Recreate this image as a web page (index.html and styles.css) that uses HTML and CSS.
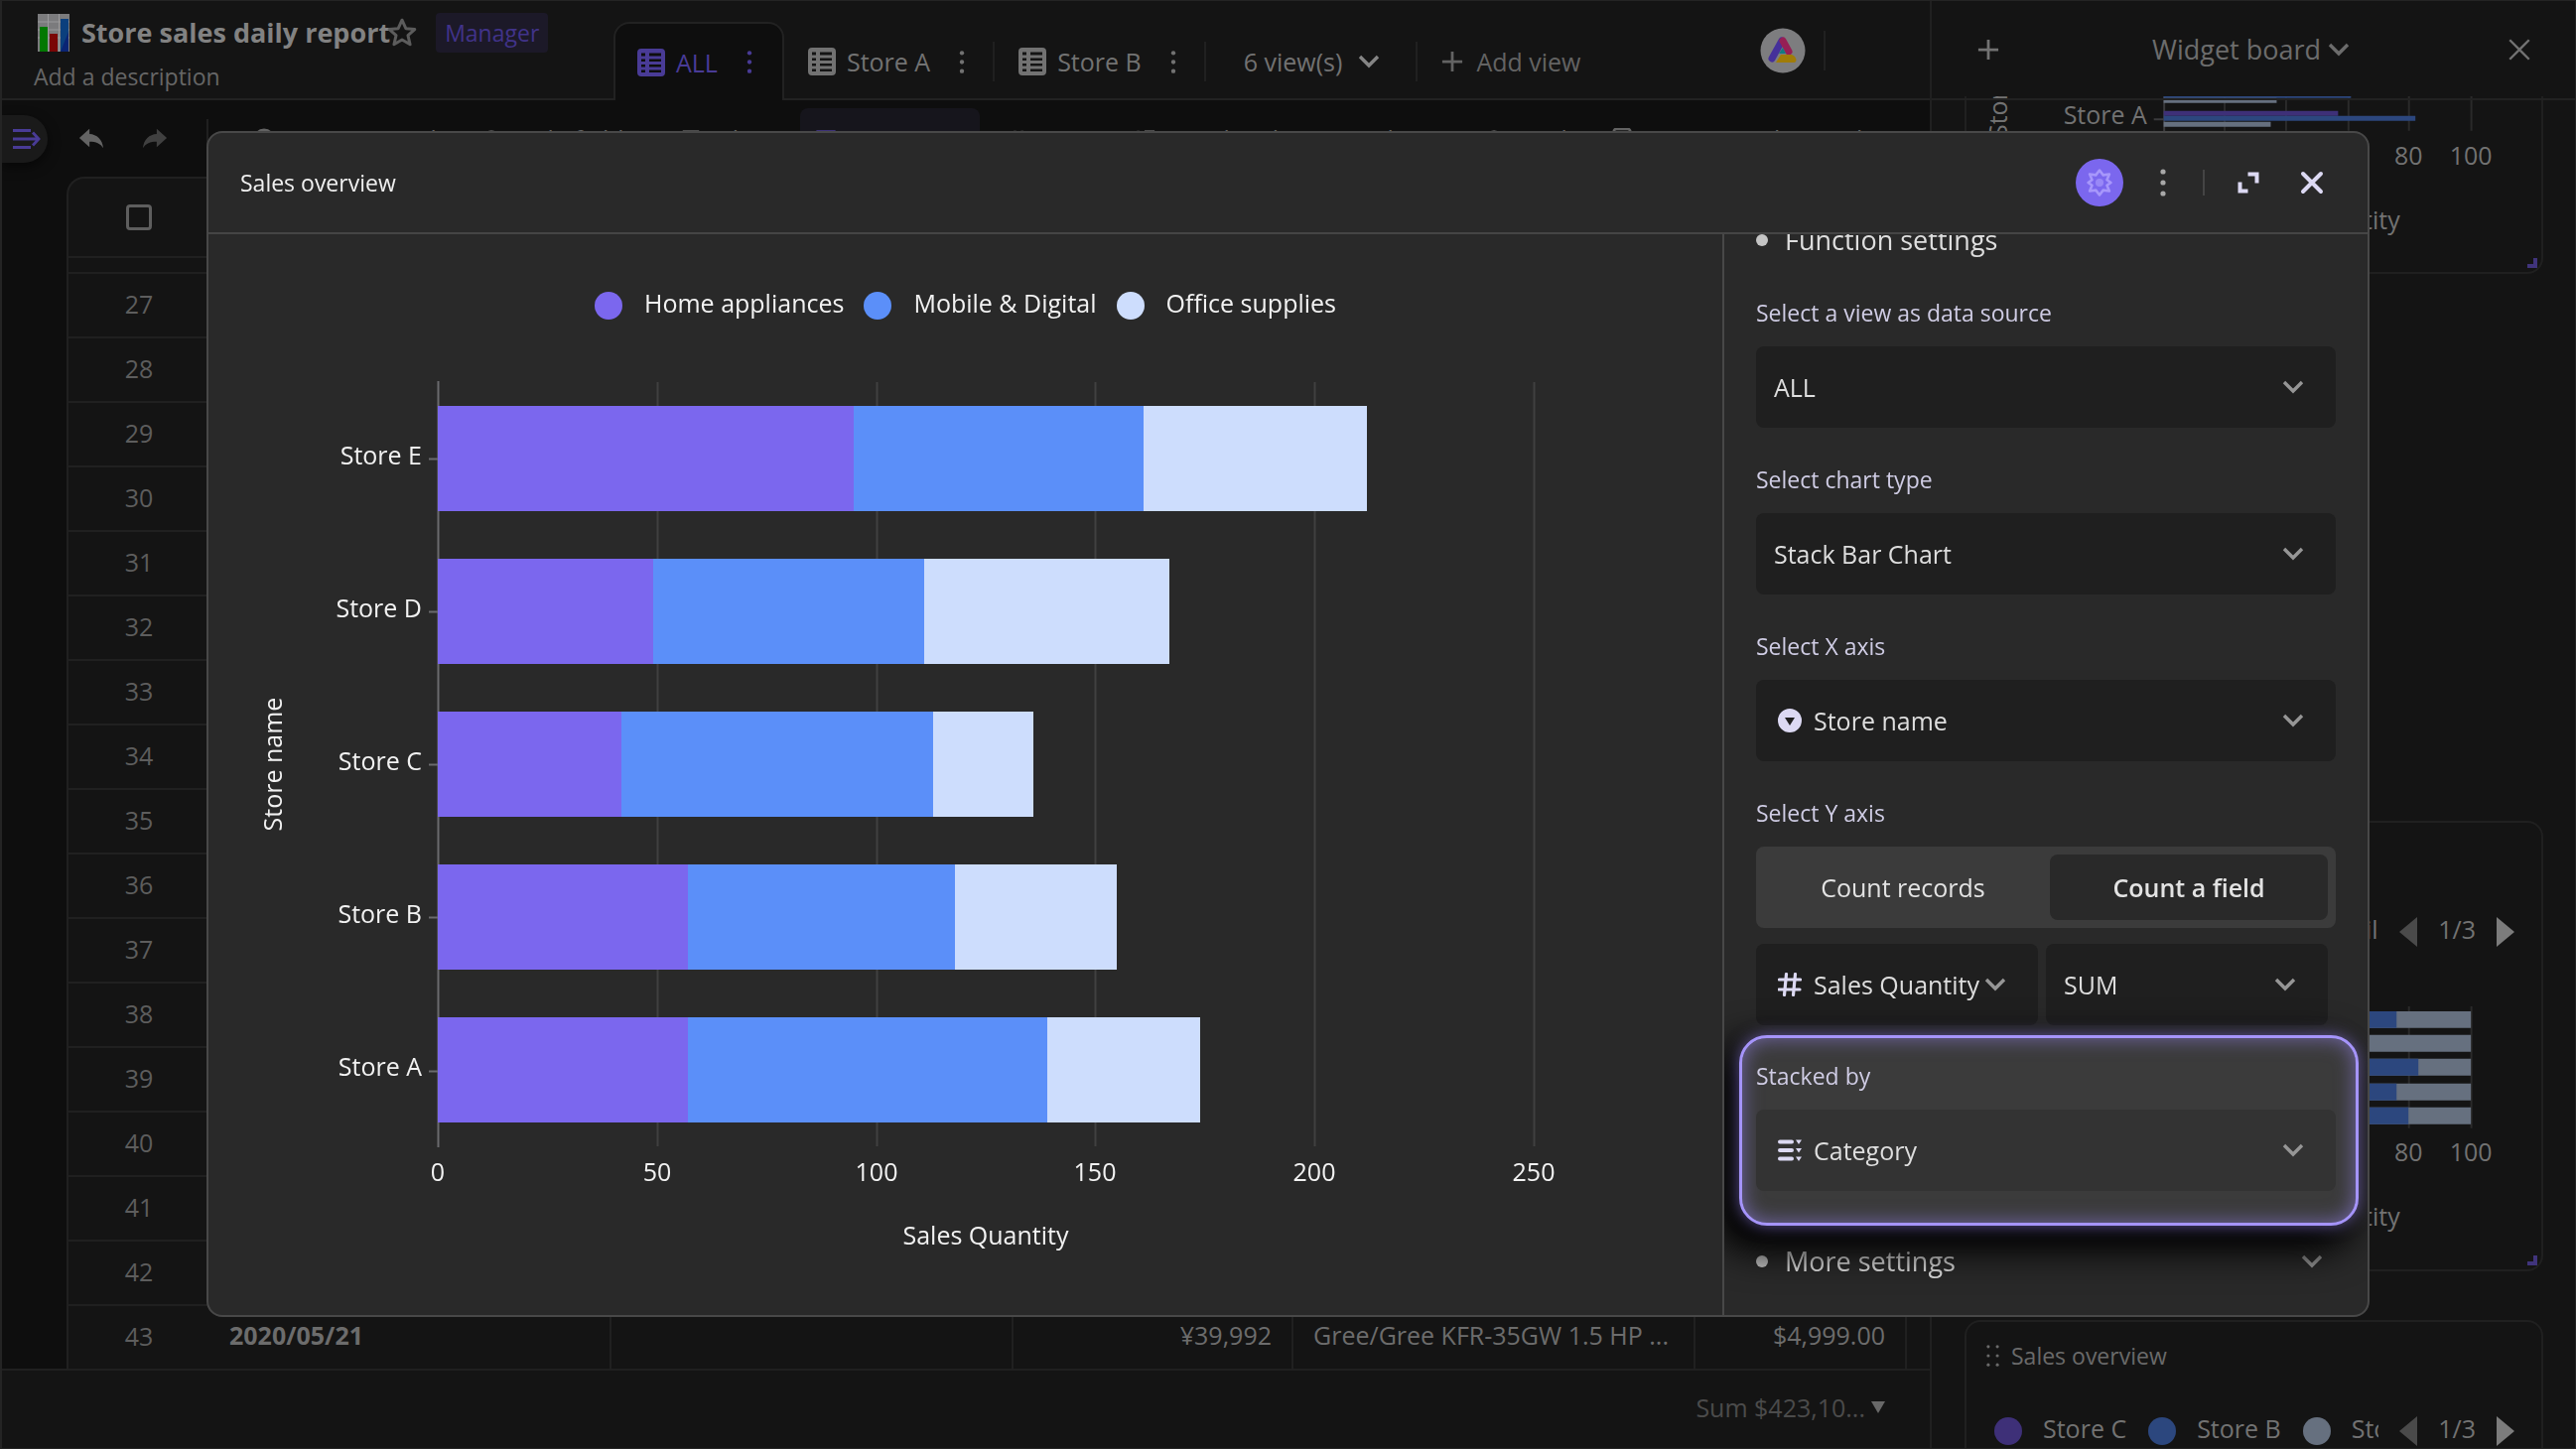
FILE: index.html
```html
<!DOCTYPE html>
<html lang="en">
<head>
<meta charset="utf-8">
<meta name="viewport" content="width=device-width, initial-scale=1">
<title>Store sales daily report</title>
<link rel="stylesheet" href="styles.css">
</head>
<body>
<svg class="sprite" aria-hidden="true">
  <symbol id="i-grid" viewBox="0 0 28 28"><path fill-rule="evenodd" fill="currentColor" d="M4 0h20a4 4 0 0 1 4 4v20a4 4 0 0 1-4 4H4a4 4 0 0 1-4-4V4a4 4 0 0 1 4-4ZM4 4.500v3h4v-3Zm8 0v3h12v-3ZM4 10.500v2.500h4v-2.500Zm8 0v2.500h12v-2.500ZM4 16v2.500h4V16Zm8 0v2.500h12V16ZM4 21.500v2.500h4v-2.500Zm8 0v2.500h12v-2.500Z"/></symbol>
  <symbol id="i-dots" viewBox="0 0 24 28"><g fill="currentColor"><circle cx="12" cy="3" r="2.6"/><circle cx="12" cy="14" r="2.6"/><circle cx="12" cy="25" r="2.6"/></g></symbol>
  <symbol id="i-chevron" viewBox="0 0 24 24"><path d="M3 7l9 9 9-9" fill="none" stroke="currentColor" stroke-width="3.4"/></symbol>
  <symbol id="i-plus" viewBox="0 0 24 24"><path d="M12 1v22M1 12h22" fill="none" stroke="currentColor" stroke-width="3"/></symbol>
  <symbol id="i-close" viewBox="0 0 24 24"><path d="M3 3l18 18M21 3L3 21" fill="none" stroke="currentColor" stroke-width="4" stroke-linecap="round"/></symbol>
  <symbol id="i-close-thin" viewBox="0 0 24 24"><path d="M3 3l18 18M21 3L3 21" fill="none" stroke="currentColor" stroke-width="2.2"/></symbol>
  <symbol id="i-undo" viewBox="0 0 28 24"><path fill="currentColor" d="M12 1v5.500C20 7 26 12 27 22c-3-5-8-7-15-7v6L1 11Z"/></symbol>
  <symbol id="i-circle-down" viewBox="0 0 24 24"><path fill-rule="evenodd" fill="currentColor" d="M12 0a12 12 0 1 1 0 24 12 12 0 0 1 0-24ZM7 9l5 8 5-8Z"/></symbol>
  <symbol id="i-hash" viewBox="0 0 24 24"><path d="M8.500 1.500L6.500 22.500M17.500 1.500L15.500 22.500M1.500 7h21M1 17h21" fill="none" stroke="currentColor" stroke-width="3.200" stroke-linecap="round"/></symbol>
  <symbol id="i-list" viewBox="0 0 24 24"><path d="M2 3.500h12M2 12h12M2 20.500h12" stroke="currentColor" stroke-width="4" stroke-linecap="round"/><path fill="currentColor" d="M18 1.500h6l-3 4.500ZM18 10h6l-3 4.500ZM18 18.500h6l-3 4.500Z"/></symbol>
  <symbol id="i-left" viewBox="0 0 20 30"><path fill="currentColor" d="M19 0v30L1 15Z"/></symbol>
  <symbol id="i-right" viewBox="0 0 20 30"><path fill="currentColor" d="M1 0v30l18-15Z"/></symbol>
  <symbol id="i-corner" viewBox="0 0 10 10"><path fill="currentColor" d="M6 0h4v10H0V6h6Z"/></symbol>
</svg>

<div class="app">
  <main class="sheet">
    <header class="topbar">
      <div class="doc">
        <div class="doc-title">
          <svg class="doc-icon" viewBox="0 0 32 38"><path fill="#7b7b7d" d="M0 0h32v38H0Z"/><path stroke="#9a9a9c" d="M0 8h32M0 16h32M0 24h32M10.500 0v38M21.500 0v38"/><path fill="#027802" d="M2 13h8v25H2Z"/><path fill="#7a0606" d="M12 20h8v18h-8Z"/><path fill="#0b3f7d" d="M23 5h8v33h-8Z"/><path fill="#0a2474" d="M31 18v20h-8Z"/></svg>
          <h1>Store sales daily report</h1>
          <button class="icon-btn star" aria-label="Favorite"><svg viewBox="0 0 30 30"><path d="M15 3l3.600 8 8.400.8-6.400 5.700 2 8.600L15 21.600 7.400 26l2-8.500L3 11.800l8.400-.8Z" fill="none" stroke="currentColor" stroke-width="2.800" stroke-linejoin="round"/></svg></button>
          <span class="badge">Manager</span>
        </div>
        <p>Add a description</p>
      </div>
      <nav class="tabs">
        <div class="tab tab-active"><a href="#all"><svg class="i28"><use href="#i-grid"/></svg>ALL</a><button class="icon-btn" aria-label="ALL options"><svg class="i-dots"><use href="#i-dots"/></svg></button></div>
        <div class="tab"><a href="#a"><svg class="i28"><use href="#i-grid"/></svg>Store A</a><button class="icon-btn" aria-label="Store A options"><svg class="i-dots"><use href="#i-dots"/></svg></button></div>
        <i class="rule"></i>
        <div class="tab"><a href="#b"><svg class="i28"><use href="#i-grid"/></svg>Store B</a><button class="icon-btn" aria-label="Store B options"><svg class="i-dots"><use href="#i-dots"/></svg></button></div>
        <i class="rule"></i>
        <button class="views">6 view(s)<svg class="i24"><use href="#i-chevron"/></svg></button>
        <i class="rule"></i>
        <button class="add-view"><svg class="i22"><use href="#i-plus"/></svg>Add view</button>
        <svg class="logo" viewBox="0 0 46 46"><circle cx="23" cy="23" r="22.500" fill="#7d7d7f"/><path d="M22 13L12 31" stroke="#45309a" stroke-width="7" stroke-linecap="round"/><path d="M23 13l6 11" stroke="#961f55" stroke-width="7" stroke-linecap="round"/><path d="M19 26l4-6 3 6Z" fill="#127a80"/><path d="M16 35l5-8h11c5 2 6 8 2 8Z" fill="#a07c08"/></svg>
        <i class="rule logo-rule"></i>
      </nav>
    </header>

    <div class="toolbar">
      <button class="side-toggle" aria-label="Open side panel"><svg viewBox="0 0 30 22"><path d="M1 2.500h18M1 11h26M1 19.500h18M21 4.500l6 6.500-6 6.500" fill="none" stroke="currentColor" stroke-width="2.800"/></svg></button>
      <button class="icon-btn" aria-label="Undo"><svg class="i26"><use href="#i-undo"/></svg></button>
      <button class="icon-btn redo" aria-label="Redo"><svg class="i26"><use href="#i-undo"/></svg></button>
      <i class="rule"></i>
      <div class="tools">
        <button><svg viewBox="0 0 24 24"><circle cx="12" cy="12" r="10"/></svg>Insert record</button>
        <button><svg viewBox="0 0 24 24"><path d="M2 12q10-16 20 0"/></svg>Hide fields</button>
        <button><svg viewBox="0 0 24 24"><path d="M3 4h18M6 11h12M10 18h4"/></svg>Filter</button>
        <button class="tool-on"><svg viewBox="0 0 24 24"><path d="M3 4h18v6H3ZM3 15h18"/></svg>1 group(s)</button>
        <button><svg viewBox="0 0 24 24"><path d="M7 3v18M15 21V3"/></svg>Sort</button>
        <button><svg viewBox="0 0 24 24"><path d="M5 3v18M12 4h11M12 12h11"/></svg>Row height</button>
        <button><svg viewBox="0 0 24 24"><path d="M12 5v14"/></svg>Share</button>
        <button><svg viewBox="0 0 24 24"><circle cx="11" cy="12" r="8"/></svg>Find</button>
        <button><svg viewBox="0 0 24 24"><rect x="3" y="1" width="18" height="22" rx="3"/></svg>Form</button>
        <button>Advanced</button>
      </div>
    </div>

    <div class="grid-area">
      <table class="grid">
        <colgroup><col class="c-num"><col class="c-wide"><col class="c-wide"><col class="c-mid"><col class="c-wide"><col class="c-price"><col></colgroup>
        <thead><tr><th><input type="checkbox" aria-label="Select all records"></th><th colspan="6"></th></tr></thead>
        <tbody>
          <tr class="spacer"><td colspan="7"></td></tr>
          <tr><td>27</td><td></td><td></td><td></td><td></td><td></td><td></td></tr>
          <tr><td>28</td><td></td><td></td><td></td><td></td><td></td><td></td></tr>
          <tr><td>29</td><td></td><td></td><td></td><td></td><td></td><td></td></tr>
          <tr><td>30</td><td></td><td></td><td></td><td></td><td></td><td></td></tr>
          <tr><td>31</td><td></td><td></td><td></td><td></td><td></td><td></td></tr>
          <tr><td>32</td><td></td><td></td><td></td><td></td><td></td><td></td></tr>
          <tr><td>33</td><td></td><td></td><td></td><td></td><td></td><td></td></tr>
          <tr><td>34</td><td></td><td></td><td></td><td></td><td></td><td></td></tr>
          <tr><td>35</td><td></td><td></td><td></td><td></td><td></td><td></td></tr>
          <tr><td>36</td><td></td><td></td><td></td><td></td><td></td><td></td></tr>
          <tr><td>37</td><td></td><td></td><td></td><td></td><td></td><td></td></tr>
          <tr><td>38</td><td></td><td></td><td></td><td></td><td></td><td></td></tr>
          <tr><td>39</td><td></td><td></td><td></td><td></td><td></td><td></td></tr>
          <tr><td>40</td><td></td><td></td><td></td><td></td><td></td><td></td></tr>
          <tr><td>41</td><td></td><td></td><td></td><td></td><td></td><td></td></tr>
          <tr><td>42</td><td></td><td></td><td></td><td></td><td></td><td></td></tr>
          <tr><td>43</td><td class="date">2020/05/21</td><td></td><td class="num">¥39,992</td><td>Gree/Gree KFR-35GW 1.5 HP ...</td><td class="num">$4,999.00</td><td></td></tr>
        </tbody>
      </table>
    </div>
    <footer class="stats"><button>Sum $423,10...<svg viewBox="0 0 14 12"><path fill="currentColor" d="M0 0h14L7 12Z"/></svg></button></footer>
  </main>

  <aside class="board">
    <header class="board-head">
      <button class="icon-btn" aria-label="Add widget"><svg class="i22"><use href="#i-plus"/></svg></button>
      <button class="board-name">Widget board<svg class="i24"><use href="#i-chevron"/></svg></button>
      <button class="icon-btn" aria-label="Close widget board"><svg class="i26"><use href="#i-close-thin"/></svg></button>
    </header>
    <div class="board-list">
      <section class="card card-first">
        <svg class="mini" viewBox="0 0 580 320" role="img" aria-label="Bar chart">
          <path class="line" d="M260.500 54v122M322.500 54v122M385.500 54v122M446.500 54v122M509.500 54v122"/>
          <path class="axis" d="M199.500 54v123M189 164.500h10"/>
          <path class="s2" d="M199 138h189v5H199Z"/><path class="s3" d="M199 143h114v5H199Z"/>
          <path class="s1" d="M199 156h176v5H199Z"/><path class="s2" d="M199 161h254v5H199Z"/><path class="s3" d="M199 167h108v5H199Z"/>
          <text x="182" y="169" text-anchor="end">Store A</text>
          <text transform="translate(41 116) rotate(-90)" text-anchor="middle">Store name</text>
          <text x="446" y="210" text-anchor="middle">80</text><text x="509" y="210" text-anchor="middle">100</text>
          <text x="354" y="276" text-anchor="middle">Sales Quantity</text>
        </svg>
        <svg class="corner"><use href="#i-corner"/></svg>
      </section>
      <section class="card card-second">
        <div class="mini-legend legend-end"><span class="clip">Mobile</span>
          <button class="pager off" aria-label="Previous"><svg><use href="#i-left"/></svg></button><span>1/3</span><button class="pager" aria-label="Next"><svg><use href="#i-right"/></svg></button>
        </div>
        <svg class="mini" viewBox="0 0 580 320" role="img" aria-label="Percent stacked bar chart">
          <path class="line" d="M446.500 54v123M509.500 54v123"/>
          <path class="s3" d="M199 59h310v17H199ZM199 83h310v17H199ZM199 107h310v17H199ZM199 132h310v17H199ZM199 156h310v17H199Z"/>
          <path class="s2" d="M199 59h235v17H199ZM199 107h257v17H199ZM199 132h235v17H199ZM199 156h247v17H199Z"/>
          <text x="446" y="210" text-anchor="middle">80</text><text x="509" y="210" text-anchor="middle">100</text>
          <text x="354" y="276" text-anchor="middle">Sales Quantity</text>
        </svg>
        <svg class="corner"><use href="#i-corner"/></svg>
      </section>
      <section class="card">
        <h2><svg viewBox="0 0 14 24"><g fill="currentColor"><circle cx="2" cy="2" r="1.700"/><circle cx="12" cy="2" r="1.700"/><circle cx="2" cy="12" r="1.700"/><circle cx="12" cy="12" r="1.700"/><circle cx="2" cy="22" r="1.700"/><circle cx="12" cy="22" r="1.700"/></g></svg>Sales overview</h2>
        <div class="mini-legend">
          <i class="dot d1"></i><span>Store C</span><i class="dot d2"></i><span>Store B</span><i class="dot d3"></i><span class="clip">Store A</span>
          <button class="pager off" aria-label="Previous"><svg><use href="#i-left"/></svg></button><span>1/3</span><button class="pager" aria-label="Next"><svg><use href="#i-right"/></svg></button>
        </div>
      </section>
    </div>
  </aside>
</div>

<div class="modal" role="dialog" aria-label="Sales overview">
  <header class="modal-head">
    <h2>Sales overview</h2>
    <button class="gear" aria-label="Settings"><svg viewBox="0 0 28 28"><path d="M14 1.500l3.700 4.900 6.200-.9-2.400 5.700 3.900 2.800-3.900 2.800 2.400 5.700-6.200-.9L14 26.500l-3.700-4.900-6.200.9 2.400-5.700L2.600 14l3.900-2.800-2.400-5.700 6.200.9Z" fill="none" stroke="currentColor" stroke-width="2.600" stroke-linejoin="round"/><circle cx="14" cy="14" r="4" fill="currentColor" fill-opacity=".7"/></svg></button>
    <button class="icon-btn more" aria-label="More"><svg class="i28"><use href="#i-dots"/></svg></button>
    <i class="rule"></i>
    <button class="icon-btn wide" aria-label="Expand"><svg class="i24" viewBox="0 0 24 24"><path d="M11.500 3.500h9v9M3.500 11.500v9h8" fill="none" stroke="currentColor" stroke-width="4"/></svg></button>
    <button class="icon-btn wide" aria-label="Close"><svg class="i24"><use href="#i-close"/></svg></button>
  </header>
  <div class="modal-body">
    <section class="chart">
      <ul class="legend">
        <li><i class="dot l1"></i><span>Home appliances</span></li>
        <li><i class="dot l2"></i><span>Mobile &amp; Digital</span></li>
        <li><i class="dot l3"></i><span>Office supplies</span></li>
      </ul>
      <svg class="plot" viewBox="210 370 1525 950" role="img" aria-label="Sales quantity by store, stacked by category">
        <path class="line" d="M662.500 385v770M883.500 385v770M1103.500 385v770M1324.500 385v770M1545.500 385v770"/>
        <path class="axis" d="M441.500 384v772M432 462.500h9M432 616.500h9M432 770.500h9M432 924.500h9M432 1079.500h9"/>
        <g class="f1"><rect x="441" y="409" width="419" height="106"/><rect x="441" y="563" width="217" height="106"/><rect x="441" y="717" width="185" height="106"/><rect x="441" y="871" width="252" height="106"/><rect x="441" y="1025" width="252" height="106"/></g>
        <g class="f2"><rect x="860" y="409" width="292" height="106"/><rect x="658" y="563" width="273" height="106"/><rect x="626" y="717" width="314" height="106"/><rect x="693" y="871" width="269" height="106"/><rect x="693" y="1025" width="362" height="106"/></g>
        <g class="f3"><rect x="1152" y="409" width="225" height="106"/><rect x="931" y="563" width="247" height="106"/><rect x="940" y="717" width="101" height="106"/><rect x="962" y="871" width="163" height="106"/><rect x="1055" y="1025" width="154" height="106"/></g>
        <g text-anchor="end"><text x="425" y="468">Store E</text><text x="425" y="622">Store D</text><text x="425" y="776">Store C</text><text x="425" y="930">Store B</text><text x="425" y="1084">Store A</text></g>
        <g text-anchor="middle"><text x="441" y="1190">0</text><text x="662" y="1190">50</text><text x="883" y="1190">100</text><text x="1103" y="1190">150</text><text x="1324" y="1190">200</text><text x="1545" y="1190">250</text>
        <text x="993" y="1254">Sales Quantity</text><text transform="translate(284 770) rotate(-90)">Store name</text></g>
      </svg>
    </section>
    <form class="settings">
      <h3>Function settings</h3>
      <div class="field"><label for="view">Select a view as data source</label>
        <div class="select"><select id="view"><option>ALL</option></select><svg class="chev"><use href="#i-chevron"/></svg></div></div>
      <div class="field"><label for="type">Select chart type</label>
        <div class="select"><select id="type"><option>Stack Bar Chart</option></select><svg class="chev"><use href="#i-chevron"/></svg></div></div>
      <div class="field"><label for="x">Select X axis</label>
        <div class="select with-icon"><select id="x"><option>Store name</option></select><svg class="lead"><use href="#i-circle-down"/></svg><svg class="chev"><use href="#i-chevron"/></svg></div></div>
      <div class="field"><label for="y">Select Y axis</label>
        <div class="segmented"><button type="button">Count records</button><button type="button" class="on">Count a field</button></div>
        <div class="pair">
          <div class="select with-icon"><select id="y"><option>Sales Quantity</option></select><svg class="lead"><use href="#i-hash"/></svg><svg class="chev"><use href="#i-chevron"/></svg></div>
          <div class="select"><select aria-label="Aggregation"><option>SUM</option></select><svg class="chev"><use href="#i-chevron"/></svg></div>
        </div></div>
      <div class="field spotlight"><label for="stack">Stacked by</label>
        <div class="select with-icon"><select id="stack"><option>Category</option></select><svg class="lead"><use href="#i-list"/></svg><svg class="chev"><use href="#i-chevron"/></svg></div></div>
      <h3 class="more-settings">More settings<svg class="i24"><use href="#i-chevron"/></svg></h3>
    </form>
  </div>
</div>
</body>
</html>
```
FILE: styles.css
```css
* { box-sizing: border-box; }
body { margin: 0; background: #0e0e0e; color: #727272; font: 25px/36px "Open Sans", "Noto Sans", sans-serif; }
h1, h2, h3, p, ul { margin: 0; padding: 0; font-weight: 400; }
a { color: inherit; text-decoration: none; }
button { margin: 0; padding: 0; border: 0; background: none; color: inherit; font: inherit; display: flex; align-items: center; cursor: pointer; }
svg { display: block; flex: none; }
.sprite { display: none; }
.i22 { width: 22px; height: 22px; }
.i24 { width: 24px; height: 24px; }
.i26 { width: 26px; height: 26px; }
.i28 { width: 28px; height: 28px; }
.rule { width: 2px; height: 40px; flex: none; background: #202020; }
.icon-btn { justify-content: center; flex: none; width: 32px; height: 32px; }

.app { display: grid; grid-template-columns: 1fr 650px; height: 100vh; overflow: hidden; border: 1px solid #242424; border-left-width: 2px; }
.sheet { display: flex; flex-direction: column; min-width: 0; min-height: 0; }

/* top bar */
.topbar { display: flex; height: 100px; flex: none; background: #141414; border-bottom: 2px solid #222; }
.doc { width: 616px; flex: none; padding: 11px 0 0 32px; color: #666; }
.doc p { font-size: 23px; line-height: 36px; margin-top: 5px; }
.doc-title { display: flex; align-items: center; height: 42px; }
.doc-icon { width: 32px; height: 38px; margin: 0 12px 0 4px; }
h1 { font-size: 27px; font-weight: 700; color: #828282; white-space: nowrap; }
.star { margin-left: -4px; color: #5c5c5c; }
.star svg { width: 32px; height: 32px; }
.badge { margin-left: 18px; padding: 0 9px; height: 40px; line-height: 40px; font-size: 23px; border-radius: 4px; background: #1c1928; color: #41338a; }
.tabs { display: flex; align-items: center; flex: 1; padding-top: 24px; white-space: nowrap; }
.tab { display: flex; align-items: center; gap: 16px; padding: 0 15px 0 24px; height: 40px; }
.tab a { display: flex; align-items: center; gap: 11px; }
.tab .i-dots { width: 20px; height: 25px; }
.tab-active { align-self: stretch; height: 79px; margin: -3px 0 -2px; padding: 0 17px 0 22px; border: 2px solid #222; border-bottom: 0; border-radius: 16px 16px 0 0; background: #0e0e0e; color: #493b96; }
.views { gap: 15px; padding: 0 35px 0 38px; }
.add-view { gap: 13px; padding-left: 24px; color: #636363; }
.views svg { color: #858585; }
.logo { width: 46px; height: 46px; margin: -22px 18px 0 auto; }
.logo-rule { margin: -22px 105px 0 0; }

/* toolbar */
.toolbar { display: flex; align-items: center; height: 77px; flex: none; color: #636363; }
.side-toggle { width: 46px; height: 48px; padding-left: 10px; border-radius: 0 24px 24px 0; margin: 0 28px 0 0; background: #1a1a1a; color: #493b96; box-shadow: 0 4px 12px #0008; }
.side-toggle svg { width: 30px; height: 22px; }
.redo { margin-left: 32px; color: #404040; }
.redo svg { transform: scaleX(-1); }
.toolbar > .rule { margin: 0 30px 0 36px; }
.tools { display: flex; gap: 14px; white-space: nowrap; }
.tools button { gap: 12px; height: 62px; padding: 0 15px; }
.tools svg { width: 22px; height: 22px; fill: none; stroke: currentColor; stroke-width: 3; }
.tool-on { border-radius: 8px; background: #16151c; color: #493b96; }

/* record grid */
.grid-area { flex: 1; min-height: 0; padding-left: 65px; overflow: hidden; }
.grid { width: 100%; table-layout: fixed; border-collapse: separate; border-spacing: 0; background: #141414; border: 2px solid #202020; border-right: 0; border-radius: 18px 0 0 0; color: #6c6c6c; }
.c-num { width: 142px; } .c-wide { width: 405px; } .c-mid { width: 282px; } .c-price { width: 213px; }
.grid th { height: 80px; padding: 0; border-bottom: 2px solid #202020; }
.grid td { height: 65px; padding: 0 20px 6px; line-height: 36px; border-bottom: 2px solid #202020; border-right: 2px solid #202020; white-space: nowrap; overflow: hidden; }
.grid td:first-child { padding: 0 0 4px; text-align: center; color: #5d5d5d; border-right: 0; }
.grid td:last-child { border-right: 0; }
.grid .spacer td { height: 16px; padding: 0; }
.grid .date { font-weight: 700; }
.grid .num { text-align: right; }
.grid input { appearance: none; display: block; width: 26px; height: 26px; margin: 0 auto; border: 3px solid #5e5e5e; border-radius: 4px; }
.stats { display: flex; justify-content: flex-end; height: 80px; flex: none; padding: 0 45px 4px 0; background: #141414; border-top: 2px solid #202020; color: #4b4b4b; }
.stats button { gap: 6px; }
.stats svg { width: 14px; height: 12px; color: #686868; }

/* widget board */
.board { display: flex; flex-direction: column; min-height: 0; background: #141414; border-left: 2px solid #202020; }
.board-head { display: flex; align-items: center; justify-content: space-between; height: 96px; flex: none; padding: 2px 40px 0 41px; }
.board-name { gap: 6px; font-size: 27px; margin-right: 5px; color: #6c6c6c; }
.board-list { position: relative; flex: 1; min-height: 0; padding: 0 32px 0 33px; overflow: hidden; }
.board-list::before { content: ""; position: absolute; inset: 2px 0 auto; height: 2px; background: #222; z-index: 1; }
.card { position: relative; display: flex; flex-direction: column; border: 2px solid #202020; border-radius: 16px; margin-bottom: 49px; height: 454px; overflow: hidden; }
.card-first { height: 320px; margin-top: -141px; border-top: 0; }
.card-second { margin-top: 551px; padding-top: 68px; }
.card h2 { display: flex; align-items: center; gap: 12px; height: 68px; flex: none; padding-left: 20px; font-size: 23px; color: #6a6a6a; }
.card h2 svg { width: 13px; height: 22px; }
.mini { width: 100%; margin-top: auto; }
.mini text { font-size: 25px; fill: #727272; }
.line { fill: none; stroke: #2a2a2a; stroke-width: 2; }
.axis { fill: none; stroke: #3a3a3c; stroke-width: 2; }
.s1 { fill: #3e3078; } .s2 { fill: #2c477e; } .s3 { fill: #66707f; }
.corner { position: absolute; right: 4px; bottom: 4px; width: 10px; height: 10px; color: #40347c; }
.mini-legend { display: flex; align-items: center; height: 40px; margin-top: 22px; padding: 0 26px 0 28px; white-space: nowrap; }
.mini-legend span { padding-bottom: 6px; }
.dot { width: 28px; height: 28px; flex: none; border-radius: 50%; margin-right: 22px; }
.mini-legend .dot { margin-right: 21px; }
.mini-legend .dot + span { margin-right: 22px; }
.d1 { background: #3e3078; } .d2 { background: #2c477e; } .d3 { background: #66707f; }
.mini-legend .clip { flex: 1; min-width: 0; overflow: hidden; }
.mini-legend .dot + .clip { margin-right: 20px; }
.mini-legend.legend-end .clip { flex: none; width: 66px; margin-right: 20px; }
.legend-end { justify-content: flex-end; }
.pager svg { width: 20px; height: 30px; }
.pager { color: #7c7c7c; }
.off { color: #4a4a4a; }
.pager + span { margin: 0 20px; }

/* widget dialog */
.modal { position: fixed; inset: 132px 208px 133px 208px; display: flex; flex-direction: column; background: #292929; border: 2px solid #484848; border-radius: 16px; color: #e3e3e3; overflow: hidden; }
.modal-head { display: flex; align-items: center; gap: 24px; height: 102px; flex: none; padding: 0 36px 0 32px; border-bottom: 2px solid #454545; }
.modal-head h2 { flex: 1; font-size: 23px; color: #f0f0f0; }
.modal-head .rule { height: 26px; background: #444; }
.gear { justify-content: center; width: 48px; height: 48px; border-radius: 50%; background: #7b67ee; color: #a797fb; }
.gear svg { width: 28px; height: 28px; }
.more { color: #a8a8a8; }
.wide { width: 40px; color: #dcd9f3; }
.modal-body { display: flex; flex: 1; min-height: 0; }
.chart { flex: 1; min-width: 0; color: #f2f2f2; }
.legend { display: flex; justify-content: center; gap: 20px; list-style: none; padding-top: 52px; height: 134px; }
.legend li { display: flex; height: 40px; align-items: center; }
.legend span { padding-bottom: 6px; }
.l1 { background: #7b67ee; } .l2 { background: #5b8ff9; } .l3 { background: #cdddfd; }
.plot { width: 100%; }
.plot text { font-size: 25px; fill: #f2f2f2; }
.plot .line { stroke: #404040; }
.plot .axis { stroke: #6a6a6e; }
.f1 { fill: #7b67ee; } .f2 { fill: #5b8ff9; } .f3 { fill: #cdddfd; }

.settings { width: 650px; flex: none; padding: 0 32px; border-left: 2px solid #484848; overflow: hidden; }
h3 { display: flex; align-items: center; font-size: 27px; height: 36px; color: #dedede; }
.settings > h3:first-child { margin: -12px 0 39px; }
h3::before { content: ""; width: 12px; height: 12px; margin: 0 17px 0 0; border-radius: 50%; background: #c4c4c4; }
.field { display: flex; flex-direction: column; margin-bottom: 36px; }
.field label { font-size: 23px; line-height: 32px; margin-bottom: 18px; color: #cfcce4; }
.select { display: grid; flex: 1; min-width: 0; align-items: center; }
.select > * { grid-area: 1 / 1; }
.select select { appearance: none; width: 100%; height: 82px; padding: 0 18px; border: 0; border-radius: 8px; background: #1f1f1f; color: #dedede; font: inherit; }
.select.with-icon select { padding: 0 0 0 58px; }
.chev { width: 24px; height: 24px; margin-right: 31px; justify-self: end; color: #969696; pointer-events: none; }
.lead { width: 24px; height: 24px; margin-left: 22px; color: #dcd9f3; pointer-events: none; }
.segmented { display: grid; grid-template-columns: 1fr 1fr; gap: 8px; height: 82px; padding: 8px; border-radius: 8px; background: #3b3b3b; }
.segmented button { justify-content: center; border-radius: 8px; }
.segmented .on { background: #292929; font-weight: 600; }
.pair { display: flex; gap: 8px; margin: 16px 8px 0 0; }
.spotlight { position: relative; margin: -26px -23px 18px -17px; padding: 22px 20px 32px 14px; border: 3px solid #a594fa; border-radius: 28px; background: #3b3b3b; box-shadow: inset 0 0 20px #8f7ee0aa, 0 0 16px #8f7ee0aa, -14px 16px 36px 10px #000; }
.spotlight select { background: #333; }
.spotlight ~ h3 svg { margin: 0 12px 0 auto; color: #969696; }
```
